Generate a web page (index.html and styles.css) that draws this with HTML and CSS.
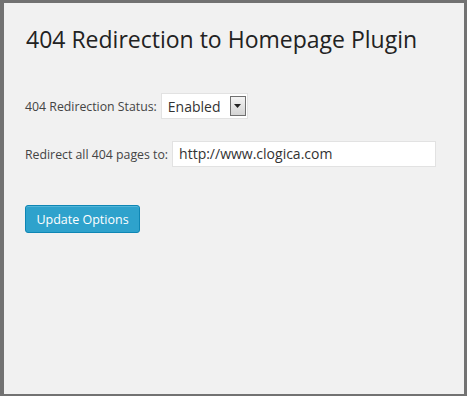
FILE: index.html
```html
<!DOCTYPE html>
<html>
<head>
    <meta name="viewport" content="width=device-width, initial-scale=1.0">
    <link rel="stylesheet" href="styles.css">
</head>
<body>
    <div class="wrap">
        <h1>404 Redirection to Homepage Plugin</h1>

        <div class="row status-row">
            <label>404 Redirection Status:</label>
            <div class="select">
                <span class="select-value">Enabled</span>
                <span class="select-arrow">
                    <svg width="7" height="4" viewBox="0 0 7 4"><path d="M0 0h7L3.5 4z" fill="#222"/></svg>
                </span>
            </div>
        </div>

        <div class="row url-row">
            <label>Redirect all 404 pages to:</label>
            <div class="text-input">http://www.clogica.com</div>
        </div>

        <button class="button">Update Options</button>
    </div>
</body>
</html>
```

FILE: styles.css
```css
* {
    margin: 0;
    padding: 0;
    box-sizing: border-box;
}

html, body {
    height: 100%;
}

body {
    background: #f1f1f1;
    font-family: "Open Sans", Arial, sans-serif;
    color: #444;
}

.wrap {
    height: 396px;
    border: 3px solid #727272;
    border-left-width: 4px;
    border-bottom-width: 2px;
    background: #f1f1f1;
    padding: 20px 0 0 21px;
}

h1 {
    font-size: 23px;
    font-weight: 400;
    color: #222;
    line-height: 29px;
    margin: 2px 0 0 1px;
}

.row {
    display: flex;
    align-items: center;
    font-size: 12.3px;
}

.row label {
    color: #444;
    margin-right: 4px;
}

.status-row {
    margin-top: 39px;
}

.select {
    display: flex;
    align-items: center;
    width: 87px;
    height: 26px;
    background: #fff;
    border: 1px solid #e2e2e2;
    padding: 0 1px 0 6px;
}

.select-value {
    flex: 1;
    font-size: 14px;
    color: #333;
}

.select-arrow {
    display: flex;
    align-items: center;
    justify-content: center;
    width: 16px;
    height: 20px;
    border: 1px solid #707070;
    background: linear-gradient(#f4f4f4, #d4d4d4);
}

.url-row {
    margin-top: 22px;
}

.text-input {
    width: 264px;
    height: 26px;
    background: #fff;
    border: 1px solid #e2e2e2;
    padding: 0 6px;
    font-size: 14px;
    line-height: 24px;
    color: #333;
}

.button {
    display: block;
    margin-top: 38px;
    width: 115px;
    height: 28px;
    background: #2ea2cc;
    border: 1px solid #0e86b4;
    border-radius: 3px;
    color: #fff;
    font-family: "Open Sans", Arial, sans-serif;
    font-size: 12.5px;
    box-shadow: inset 0 1px 0 rgba(120, 200, 230, 0.5);
}
```
